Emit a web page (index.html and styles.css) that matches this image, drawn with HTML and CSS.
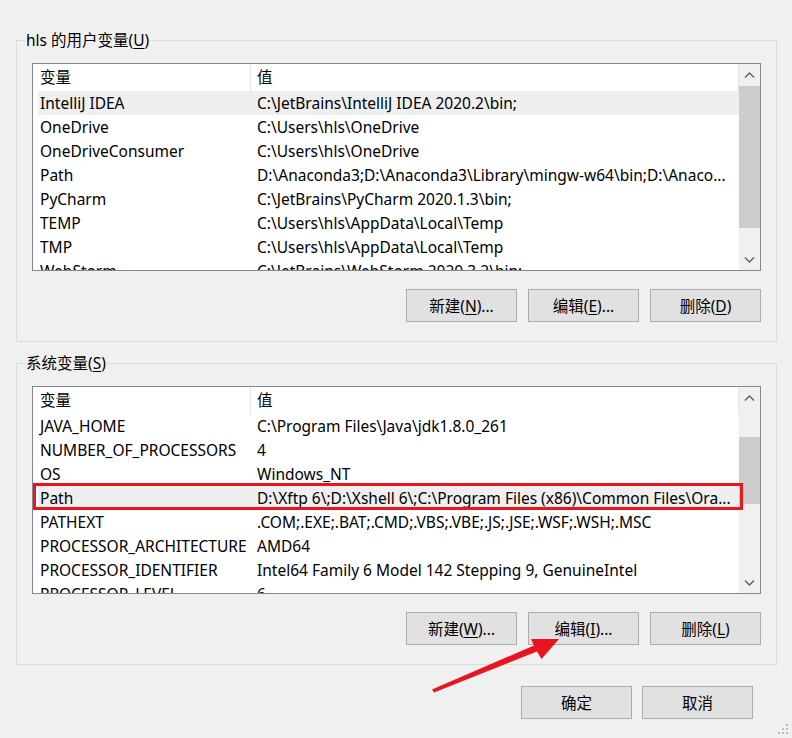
FILE: index.html
```html
<!DOCTYPE html>
<html lang="zh-CN">
<head>
<meta charset="utf-8">
<title>环境变量</title>
<link rel="stylesheet" href="styles.css">
</head>
<body>
<div class="dialog">
  <fieldset class="group">
    <legend>hls 的用户变量(<u>U</u>)</legend>
    <div class="list">
      <div class="list-body">
        <div class="list-header">
          <div class="hcell hname">变量</div>
          <div class="hcell hvalue">值</div>
        </div>
        <div class="row selected"><span class="cname">IntelliJ IDEA</span><span class="cvalue">C:\JetBrains\IntelliJ IDEA 2020.2\bin;</span></div>
        <div class="row"><span class="cname">OneDrive</span><span class="cvalue">C:\Users\hls\OneDrive</span></div>
        <div class="row"><span class="cname">OneDriveConsumer</span><span class="cvalue">C:\Users\hls\OneDrive</span></div>
        <div class="row"><span class="cname">Path</span><span class="cvalue">D:\Anaconda3;D:\Anaconda3\Library\mingw-w64\bin;D:\Anaco...</span></div>
        <div class="row"><span class="cname">PyCharm</span><span class="cvalue">C:\JetBrains\PyCharm 2020.1.3\bin;</span></div>
        <div class="row"><span class="cname">TEMP</span><span class="cvalue">C:\Users\hls\AppData\Local\Temp</span></div>
        <div class="row"><span class="cname">TMP</span><span class="cvalue">C:\Users\hls\AppData\Local\Temp</span></div>
        <div class="row"><span class="cname">WebStorm</span><span class="cvalue">C:\JetBrains\WebStorm 2020.3.2\bin;</span></div>
      </div>
      <div class="scrollbar">
        <div class="sb-btn"><svg class="chev" width="11" height="6" viewBox="0 0 11 6"><polyline points="1,5.5 5.5,1 10,5.5"/></svg></div>
        <div class="sb-track"><div class="sb-thumb" style="margin-top:1px;height:142px"></div></div>
        <div class="sb-btn"><svg class="chev" width="11" height="6" viewBox="0 0 11 6"><polyline points="1,0.5 5.5,5 10,0.5"/></svg></div>
      </div>
    </div>
    <div class="buttons">
      <button class="btn">新建(<u>N</u>)...</button>
      <button class="btn">编辑(<u>E</u>)...</button>
      <button class="btn">删除(<u>D</u>)</button>
    </div>
  </fieldset>

  <fieldset class="group group-sys">
    <legend>系统变量(<u>S</u>)</legend>
    <div class="list">
      <div class="list-body">
        <div class="list-header">
          <div class="hcell hname">变量</div>
          <div class="hcell hvalue">值</div>
        </div>
        <div class="row"><span class="cname">JAVA_HOME</span><span class="cvalue">C:\Program Files\Java\jdk1.8.0_261</span></div>
        <div class="row"><span class="cname">NUMBER_OF_PROCESSORS</span><span class="cvalue">4</span></div>
        <div class="row"><span class="cname">OS</span><span class="cvalue">Windows_NT</span></div>
        <div class="row selected"><span class="cname">Path</span><span class="cvalue">D:\Xftp 6\;D:\Xshell 6\;C:\Program Files (x86)\Common Files\Ora...</span></div>
        <div class="row"><span class="cname">PATHEXT</span><span class="cvalue">.COM;.EXE;.BAT;.CMD;.VBS;.VBE;.JS;.JSE;.WSF;.WSH;.MSC</span></div>
        <div class="row"><span class="cname">PROCESSOR_ARCHITECTURE</span><span class="cvalue">AMD64</span></div>
        <div class="row"><span class="cname">PROCESSOR_IDENTIFIER</span><span class="cvalue">Intel64 Family 6 Model 142 Stepping 9, GenuineIntel</span></div>
        <div class="row"><span class="cname">PROCESSOR_LEVEL</span><span class="cvalue">6</span></div>
      </div>
      <div class="scrollbar">
        <div class="sb-btn"><svg class="chev" width="11" height="6" viewBox="0 0 11 6"><polyline points="1,5.5 5.5,1 10,5.5"/></svg></div>
        <div class="sb-track"><div class="sb-thumb" style="margin-top:29px;height:67px"></div></div>
        <div class="sb-btn"><svg class="chev" width="11" height="6" viewBox="0 0 11 6"><polyline points="1,0.5 5.5,5 10,0.5"/></svg></div>
      </div>
      <div class="highlight-box"></div>
    </div>
    <div class="buttons">
      <button class="btn">新建(<u>W</u>)...</button>
      <button class="btn">编辑(<u>I</u>)...</button>
      <button class="btn">删除(<u>L</u>)</button>
    </div>
  </fieldset>

  <div class="footer">
    <button class="btn">确定</button>
    <button class="btn">取消</button>
  </div>
</div>

<svg class="annot-arrow" width="792" height="738" viewBox="0 0 792 738">
  <polygon points="432,689.5 534,645.5 531,639 559,639 541.5,659 537,651.5 434,692.5"/>
</svg>

<svg class="grip" width="11" height="11" viewBox="0 0 11 11">
  <rect x="8" y="0" width="2" height="2"/>
  <rect x="4" y="4" width="2" height="2"/>
  <rect x="8" y="4" width="2" height="2"/>
  <rect x="0" y="8" width="2" height="2"/>
  <rect x="4" y="8" width="2" height="2"/>
  <rect x="8" y="8" width="2" height="2"/>
</svg>
</body>
</html>
```

FILE: styles.css
```css
html, body {
  margin: 0;
  padding: 0;
}

body {
  width: 792px;
  height: 738px;
  overflow: hidden;
  position: relative;
  background: #f0f0f0;
  color: #000;
  font-family: "Noto Sans", "Noto Sans CJK SC", sans-serif;
  font-size: 15.5px;
}

.dialog {
  padding-top: 30px;
}

.group {
  margin: 0 15px 0 16px;
  padding: 13px 15px 19px;
  border: 1px solid #dcdcdc;
  min-width: 0;
}

.group-sys {
  margin-top: 11px;
}

.group legend {
  padding: 0 1px;
  margin-left: -7px;
  line-height: 20px;
}

u {
  text-underline-offset: 2px;
}

.list {
  position: relative;
  display: flex;
  height: 208px;
  box-sizing: border-box;
  border: 1px solid #828790;
  background: #fff;
}

.list-body {
  flex: 1;
  min-width: 0;
  overflow: hidden;
}

.list-header {
  display: flex;
  height: 27px;
  line-height: 27px;
}

.hcell {
  box-sizing: border-box;
  border-right: 1px solid #e5e5e5;
}

.hname {
  width: 218px;
  padding-left: 7px;
}

.hvalue {
  flex: 1;
  padding-left: 6px;
}

.row {
  display: grid;
  grid-template-columns: 212px 1fr;
  height: 24px;
  line-height: 24px;
  margin-left: 5px;
  white-space: nowrap;
}

.row.selected {
  background: #efefef;
}

.cname {
  padding-left: 2px;
  overflow: hidden;
}

.cvalue {
  padding-left: 7px;
  overflow: hidden;
}

.scrollbar {
  width: 21px;
  display: flex;
  flex-direction: column;
  background: #f0f0f0;
}

.sb-btn {
  height: 21px;
  display: flex;
  align-items: center;
  justify-content: center;
}

.chev {
  fill: none;
  stroke: #606060;
  stroke-width: 1.4;
}

.sb-track {
  flex: 1;
}

.sb-thumb {
  background: #cdcdcd;
}

.highlight-box {
  position: absolute;
  left: 0;
  top: 96px;
  width: 710px;
  height: 27px;
  box-sizing: border-box;
  border: 3px solid #e8141e;
  z-index: 2;
}

.buttons {
  display: flex;
  justify-content: flex-end;
  gap: 11px;
  margin-top: 18px;
}

.btn {
  width: 111px;
  height: 33px;
  padding: 0;
  border: 1px solid #adadad;
  background: #e1e1e1;
  color: #000;
  font: inherit;
  line-height: 20px;
}

.footer {
  display: flex;
  justify-content: flex-end;
  gap: 10px;
  margin-top: 21px;
  padding-right: 39px;
}

.annot-arrow {
  position: absolute;
  left: 0;
  top: 0;
  pointer-events: none;
  fill: #e8141e;
}

.grip {
  position: absolute;
  left: 778px;
  top: 724px;
  fill: #bdbdbd;
}
```
